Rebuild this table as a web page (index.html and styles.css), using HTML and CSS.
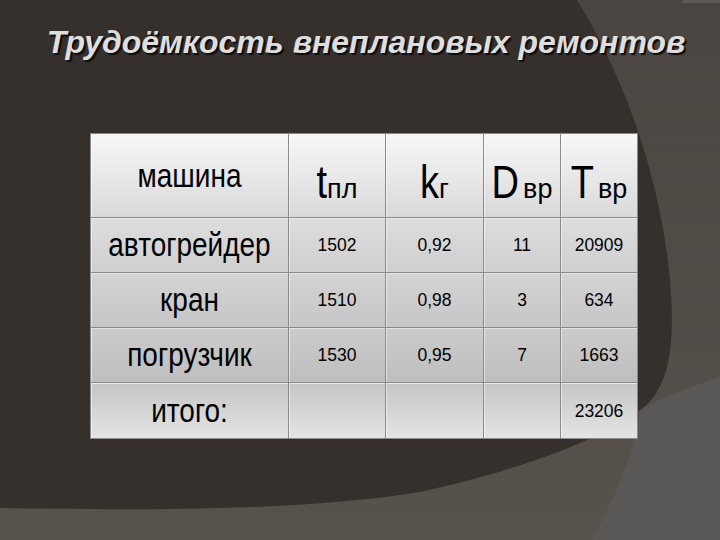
FILE: index.html
```html
<!DOCTYPE html>
<html lang="ru">
<head>
<meta charset="utf-8">
<title>Трудоёмкость внеплановых ремонтов</title>
<link rel="stylesheet" href="styles.css">
</head>
<body>
<div class="slide">
  <svg class="bg" width="720" height="540" viewBox="0 0 720 540" aria-hidden="true">
    <defs>
      <linearGradient id="band" x1="0" y1="0" x2="0" y2="1">
        <stop offset="0" stop-color="#4a4540"/>
        <stop offset="1" stop-color="#58524d"/>
      </linearGradient>
    </defs>
    <rect width="720" height="540" fill="url(#band)"/>
    <path d="M720,376 C690,388 660,398 640,410 C636,450 614,500 592,540 L720,540 Z" fill="#595856"/>
    <path d="M0,0 L577,0 C620,70 660,170 670,280 C676,350 668,390 640,410 C600,440 520,470 420,492 C300,512 120,510 0,508 Z" fill="#35302b"/>
    <rect x="682" y="0" width="38" height="3" fill="#5d5855"/>
  </svg>

  <h1 class="title">Трудоёмкость внеплановых ремонтов</h1>

  <table class="grid">
    <colgroup>
      <col class="c-name">
      <col class="c-t">
      <col class="c-k">
      <col class="c-d">
      <col class="c-tt">
    </colgroup>
    <tr class="head">
      <td class="label"><span class="lbl">машина</span></td>
      <td class="sym"><span class="big">t</span><span class="sub">пл</span></td>
      <td class="sym"><span class="big">k</span><span class="sub">г</span></td>
      <td class="sym"><span class="big">D</span><span class="sub gap">вр</span></td>
      <td class="sym"><span class="big">T</span><span class="sub gap">вр</span></td>
    </tr>
    <tr class="r1">
      <td class="label"><span class="lbl">автогрейдер</span></td>
      <td class="num"><span class="n">1502</span></td>
      <td class="num"><span class="n">0,92</span></td>
      <td class="num"><span class="n">11</span></td>
      <td class="num"><span class="n">20909</span></td>
    </tr>
    <tr class="r2">
      <td class="label"><span class="lbl">кран</span></td>
      <td class="num"><span class="n">1510</span></td>
      <td class="num"><span class="n">0,98</span></td>
      <td class="num"><span class="n">3</span></td>
      <td class="num"><span class="n">634</span></td>
    </tr>
    <tr class="r3">
      <td class="label"><span class="lbl">погрузчик</span></td>
      <td class="num"><span class="n">1530</span></td>
      <td class="num"><span class="n">0,95</span></td>
      <td class="num"><span class="n">7</span></td>
      <td class="num"><span class="n">1663</span></td>
    </tr>
    <tr class="r4">
      <td class="label"><span class="lbl">итого:</span></td>
      <td class="num"></td>
      <td class="num"></td>
      <td class="num"></td>
      <td class="num"><span class="n">23206</span></td>
    </tr>
  </table>
</div>
</body>
</html>
```

FILE: styles.css
```css
html, body {
  margin: 0;
  padding: 0;
  background: #35302b;
}

.slide {
  position: relative;
  width: 720px;
  height: 540px;
  overflow: hidden;
  display: flex;
  flex-direction: column;
}

.bg {
  position: absolute;
  left: 0;
  top: 0;
  z-index: 0;
}

.title {
  position: relative;
  z-index: 1;
  margin: 22px 0 0 0;
  padding-left: 12px;
  height: 40px;
  line-height: 40px;
  text-align: center;
  font-family: "Liberation Sans", Arial, sans-serif;
  font-style: italic;
  font-weight: bold;
  font-size: 32px;
  color: #dedede;
  text-shadow: 2px 2px 1px #0e0c0b;
  white-space: nowrap;
}

.grid {
  position: relative;
  z-index: 1;
  margin: 71px 0 0 90px;
  border-collapse: collapse;
  table-layout: fixed;
  width: 547px;
  font-family: "Liberation Sans", Arial, sans-serif;
  color: #000;
}

.c-name { width: 198px; }
.c-t { width: 97px; }
.c-k { width: 98px; }
.c-d { width: 77px; }
.c-tt { width: 77px; }

.grid td {
  border: 1px solid #8a8a8a;
  padding: 0;
  text-align: center;
  vertical-align: middle;
  box-shadow: inset 1px 1px 0 rgba(255, 255, 255, 0.5);
  line-height: 1;
}

.head td {
  height: 83px;
  background: linear-gradient(to bottom, #f7f7f7, #d9d9d9);
}
.r1 td {
  height: 54px;
  background: linear-gradient(to bottom, #dddddd, #cfcfcf);
}
.r2 td {
  height: 54px;
  background: linear-gradient(to bottom, #d3d3d3, #c6c6c6);
}
.r3 td {
  height: 54px;
  background: linear-gradient(to bottom, #cbcbcb, #bebebe);
}
.r4 td {
  height: 55px;
  background: linear-gradient(to bottom, #c6c6c6, #e4e4e4);
}

.lbl {
  display: inline-block;
  font-size: 28px;
  transform: scaleY(1.2);
  transform-origin: 50% 50%;
}

.n {
  display: inline-block;
  font-size: 17.5px;
  transform: scaleY(1.1);
  transform-origin: 50% 50%;
}

.grid .head td.sym {
  vertical-align: top;
  padding-top: 32px;
  height: 51px;
}

.big {
  display: inline-block;
  font-size: 38px;
  transform: scaleY(1.22);
  transform-origin: 50% 84.6%;
}

.sub {
  font-size: 27px;
}

.sub.gap {
  margin-left: 4px;
}
```
